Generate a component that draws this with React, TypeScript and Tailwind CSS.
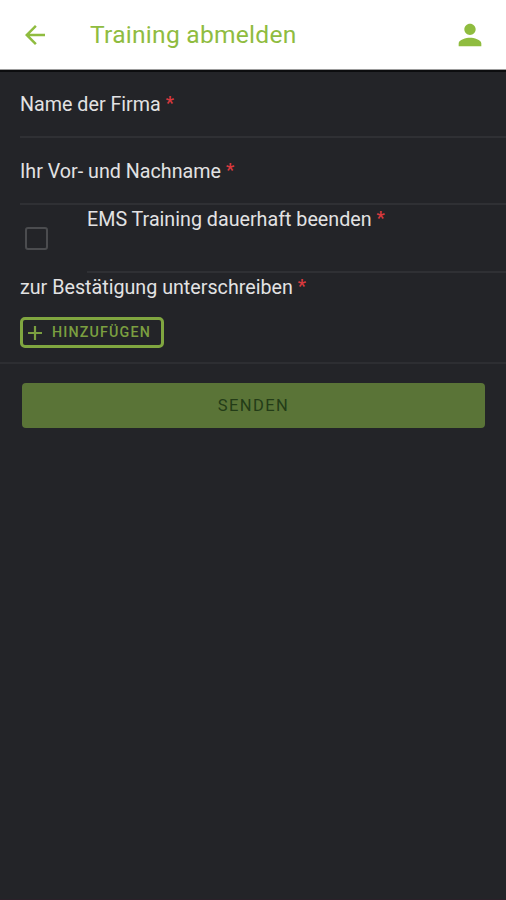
import { ReactNode } from "react";
import { MdArrowBack, MdPerson } from "react-icons/md";

function Label({ children }: { children: ReactNode }) {
  return (
    <span className="block text-[19.7px] leading-6 whitespace-nowrap text-[#e2e2e3]">
      {children} <span className="align-[2px] text-[18px] leading-none font-bold text-[#d8393e]">*</span>
    </span>
  );
}

export default function App() {
  return (
    <div className="flex h-[900px] w-[506px] flex-col overflow-hidden border-b border-[#2b2029] bg-[#232428] font-['Roboto',sans-serif]">
      <header className="flex h-[70px] shrink-0 items-center border-b border-[#9c9c9c] bg-white pr-[19px] pl-[20px] text-[#8fbc3f]">
        <MdArrowBack size={30} />
        <h1 className="ml-[40px] flex-1 pt-px text-[24.6px] leading-8 tracking-[0.25px]">Training abmelden</h1>
        <MdPerson size={34} />
      </header>

      <main className="flex flex-col border-t-2 border-[#0c0d0f]">
        <div className="ml-5 h-[66px] border-b-2 border-[#2f3034] pt-[21px]">
          <Label>Name der Firma</Label>
        </div>
        <div className="ml-5 h-[67px] border-b-2 border-[#2f3034] pt-[22px]">
          <Label>Ihr Vor- und Nachname</Label>
        </div>
        <div className="flex h-[68px] pl-[25px]">
          <span className="mt-[22px] size-[23px] rounded-[3px] border-[2.5px] border-[#4b4c4f]" />
          <div className="ml-[39px] flex-1 border-b-2 border-[#2f3034] pt-[3px]">
            <Label>EMS Training dauerhaft beenden</Label>
          </div>
        </div>
        <div className="flex h-[91px] flex-col items-start border-b-2 border-[#2d2e32] pt-[3px] pl-5">
          <Label>zur Bestätigung unterschreiben</Label>
          <button className="mt-[17px] flex h-[31px] w-[144px] items-center rounded-[5px] border-3 border-[#80a640] pl-[5px] text-[14.3px] font-medium tracking-[1.15px] text-[#7b9f40]">
            <svg className="mr-[10px] size-[14px]" viewBox="0 0 14 14" stroke="currentColor" strokeWidth="2.2">
              <path d="M7 0v14M0 7h14" />
            </svg>
            <span className="pt-px">HINZUFÜGEN</span>
          </button>
        </div>
        <button className="mr-[21px] ml-[22px] mt-[19px] h-[45px] rounded-[4px] bg-[#5a7437] pt-[2px] text-[16.5px] tracking-[1.4px] text-[#233c17]">
          SENDEN
        </button>
      </main>
    </div>
  );
}
